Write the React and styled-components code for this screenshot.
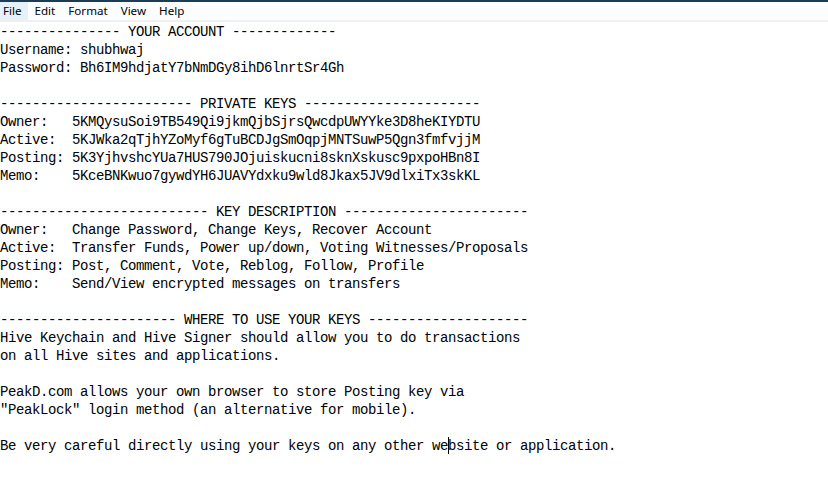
import React from "react";
import styled, { createGlobalStyle } from "styled-components";

const Global = createGlobalStyle`
  html, body { margin: 0; padding: 0; background: #ffffff; }
  body { overflow: hidden; }
`;

const Window = styled.div`
  width: 828px;
  height: 482px;
  display: flex;
  flex-direction: column;
  background: #ffffff;
`;

const TopEdge = styled.div`
  height: 2px;
  background: #1c3d55;
`;

const MenuBar = styled.nav`
  height: 18px;
  display: flex;
  align-items: stretch;
  background: #fcfdff;
  border-bottom: 2px solid #f0f0f0;
  font-family: "Noto Sans", "Open Sans", sans-serif;
  font-size: 11.6px;
  color: #000;
`;

const MenuItem = styled.span`
  display: flex;
  align-items: center;
  padding: 0 6px 0 3px;
  margin-right: 4px;
  background: ${(p) => (p.$active ? "#e5f1fb" : "transparent")};
  line-height: 18px;
`;

const Editor = styled.div`
  flex: 1;
  padding-top: 1px;
  font-family: "Liberation Mono", "DejaVu Sans Mono", monospace;
  font-size: 14px;
  letter-spacing: -0.4px;
  line-height: 18px;
  color: #000;
  white-space: pre;
`;

const Line = styled.div`
  height: 18px;
`;

const Caret = styled.span`
  display: inline-block;
  width: 1px;
  height: 17px;
  background: #000;
  vertical-align: -4px;
  margin-right: -1px;
`;

const lines = [
  "--------------- YOUR ACCOUNT -------------",
  "Username: shubhwaj",
  "Password: Bh6IM9hdjatY7bNmDGy8ihD6lnrtSr4Gh",
  "",
  "------------------------ PRIVATE KEYS ----------------------",
  "Owner:   5KMQysuSoi9TB549Qi9jkmQjbSjrsQwcdpUWYYke3D8heKIYDTU",
  "Active:  5KJWka2qTjhYZoMyf6gTuBCDJgSmOqpjMNTSuwP5Qgn3fmfvjjM",
  "Posting: 5K3YjhvshcYUa7HUS790JOjuiskucni8sknXskusc9pxpoHBn8I",
  "Memo:    5KceBNKwuo7gywdYH6JUAVYdxku9wld8Jkax5JV9dlxiTx3skKL",
  "",
  "-------------------------- KEY DESCRIPTION -----------------------",
  "Owner:   Change Password, Change Keys, Recover Account",
  "Active:  Transfer Funds, Power up/down, Voting Witnesses/Proposals",
  "Posting: Post, Comment, Vote, Reblog, Follow, Profile",
  "Memo:    Send/View encrypted messages on transfers",
  "",
  "---------------------- WHERE TO USE YOUR KEYS --------------------",
  "Hive Keychain and Hive Signer should allow you to do transactions",
  "on all Hive sites and applications.",
  "",
  "PeakD.com allows your own browser to store Posting key via",
  "\"PeakLock\" login method (an alternative for mobile).",
  "",
];

export default function App() {
  return (
    <Window>
      <Global />
      <TopEdge />
      <MenuBar>
        <MenuItem $active>File</MenuItem>
        <MenuItem>Edit</MenuItem>
        <MenuItem>Format</MenuItem>
        <MenuItem>View</MenuItem>
        <MenuItem>Help</MenuItem>
      </MenuBar>
      <Editor>
        {lines.map((l, i) => (
          <Line key={i}>{l}</Line>
        ))}
        <Line>
          Be very careful directly using your keys on any other we
          <Caret />
          bsite or application.
        </Line>
      </Editor>
    </Window>
  );
}
